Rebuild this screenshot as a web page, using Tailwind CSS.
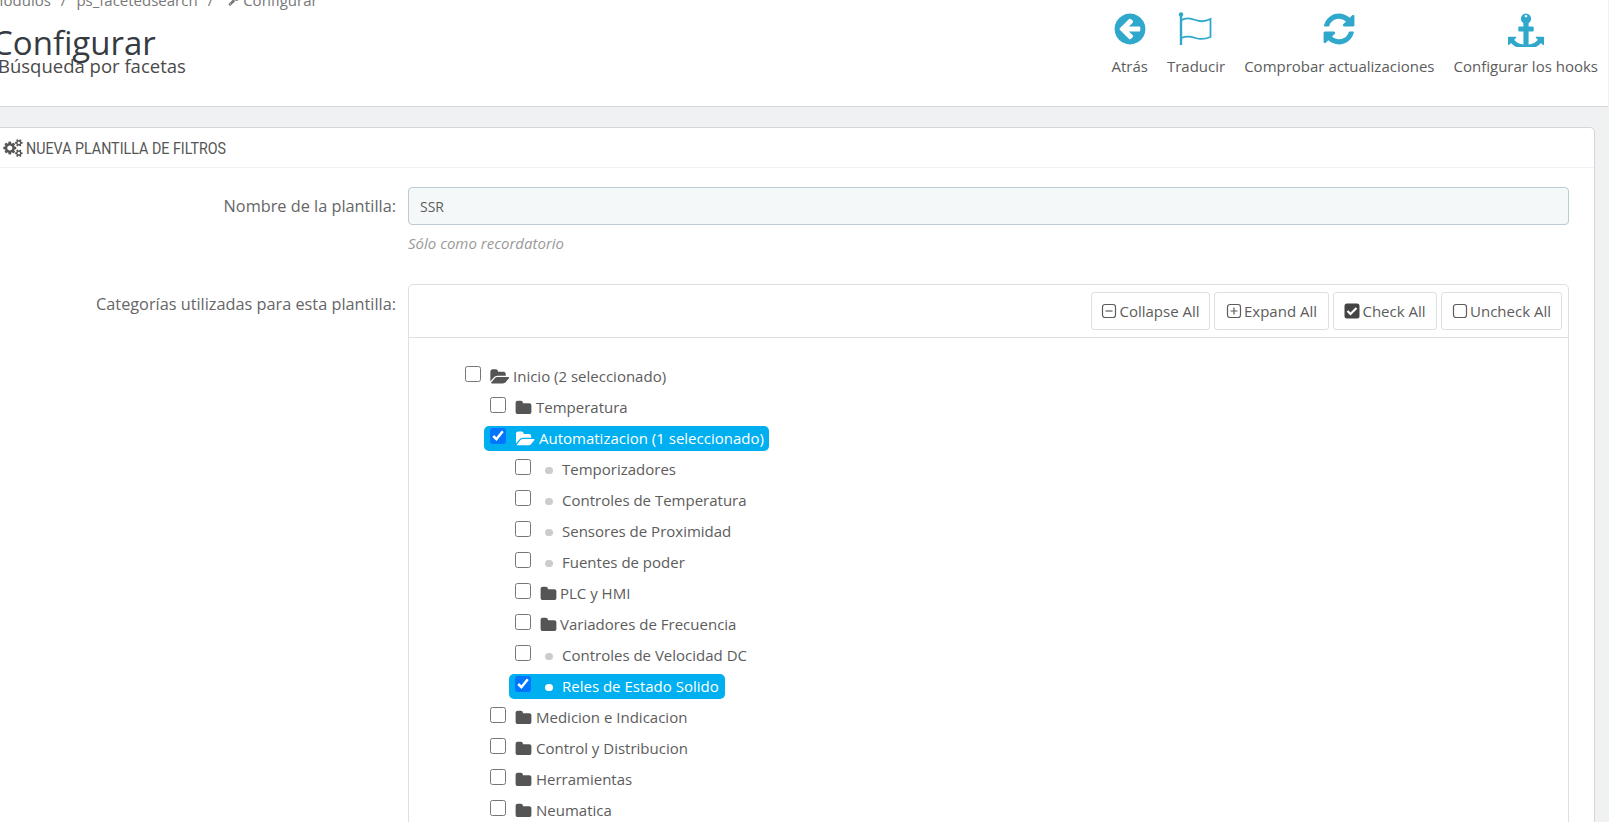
<!DOCTYPE html>
<html lang="es">
<head>
<meta charset="utf-8">
<script src="https://cdn.jsdelivr.net/npm/@tailwindcss/browser@4"></script>
<title>Configurar</title>
</head>
<body class="h-[822px] w-[1609px] overflow-hidden bg-[#eff1f2] font-['Open_Sans',sans-serif] text-[15px] text-[#5c5c5c]">
<svg class="hidden">
<symbol id="folder" viewBox="0 0 1792 1792"><path fill="currentColor" d="M1728 608v704q0 92-66 158t-158 66h-1216q-92 0-158-66t-66-158v-960q0-92 66-158t158-66h320q92 0 158 66t66 158v32h672q92 0 158 66t66 158z"/></symbol>
<symbol id="open" viewBox="0 0 1920 1792"><path fill="currentColor" d="M1879 952q0 31-31 66l-336 396q-43 51-120.500 86.500t-143.500 35.500h-1088q-34 0-60.500-13t-26.500-43q0-31 31-66l336-396q43-51 120.500-86.500t143.500-35.500h1088q34 0 60.500 13t26.500 43zm-343-344v160h-832q-94 0-197 47.500t-164 119.500l-337 396-5 6q0-4-.5-12.500t-.5-12.500v-960q0-92 66-158t158-66h320q92 0 158 66t66 158v32h544q92 0 158 66t66 158z"/></symbol>
</svg>

<header class="flex h-[107px] w-[1608px] justify-between border-b border-[#d5d7d9] bg-white">
  <div class="-ml-[8px]">
    <div class="-mt-[10px] -ml-[2px] flex h-[20px] items-center gap-[10px] text-[15px] text-[#777]">
      <span>Módulos</span><span>/</span><span>ps_facetedsearch</span><span>/</span>
      <span class="ml-[5px] flex items-center gap-[3px]"><svg class="h-3 w-3" viewBox="0 0 1792 1792"><path fill="currentColor" d="M448 1472q0-26-19-45t-45-19-45 19-19 45 19 45 45 19 45-19 19-45zm644-420l-682 682q-37 37-90 37-52 0-91-37l-106-108q-38-36-38-90 0-53 38-91l681-681q39 98 114.500 173.500t173.500 114.500zm634-435q0 39-23 106-47 134-164.500 217.500t-258.500 83.500q-185 0-316.500-131.500t-131.500-316.500 131.500-316.500 316.500-131.500q58 0 121.500 16.500t107.500 46.500q16 11 16 28t-16 28l-293 169v224l193 107q5-3 79-48.500t135.500-81 70.500-35.500q15 0 23.500 10t8.500 25z"/></svg>Configurar</span>
    </div>
    <h1 class="mt-[11px] text-[33px] leading-[44px] font-normal text-[#363a41]">Configurar</h1>
    <p class="-mt-[11px] pl-[6px] text-[18.500px] leading-[24px] text-[#4a4a4a]">Búsqueda por facetas</p>
  </div>
  <nav class="mr-[10px] flex gap-[19px] pt-[11px] text-[15px] text-[#5c5c5c]">
    <a class="flex flex-col items-center gap-[8px]">
      <svg class="h-[36px] w-[36px] text-[#2fa8cc]" viewBox="0 0 1792 1792"><path fill="currentColor" d="M1408 960v-128q0-26-19-45t-45-19h-502l189-189q19-19 19-45t-19-45l-91-91q-18-18-45-18t-45 18l-362 362-91 91q-18 18-18 45t18 45l91 91 362 362q18 18 45 18t45-18l91-91q18-18 18-45t-18-45l-189-189h502q26 0 45-19t19-45zm256-64q0 209-103 385.500t-279.500 279.500-385.500 103-385.500-103-279.500-279.500-103-385.500 103-385.500 279.500-279.500 385.500-103 385.500 103 279.500 279.500 103 385.500z"/></svg>
      <span>Atrás</span>
    </a>
    <a class="flex flex-col items-center gap-[8px]">
      <svg class="h-[36px] w-[36px] text-[#2fa8cc]" viewBox="0 0 36 36" fill="none" stroke="currentColor"><circle cx="3" cy="3.500" r="2.200" fill="currentColor" stroke="none"/><path stroke-width="2.400" d="M3 4v30"/><path stroke-width="1.800" d="M3.500 9c5-3 9-2 14 0s9 2 15-1v18c-5 2-9 3-15 1s-10-2-14 0"/></svg>
      <span>Traducir</span>
    </a>
    <a class="flex flex-col items-center gap-[8px]">
      <svg class="h-[36px] w-[36px] text-[#2fa8cc]" viewBox="0 0 1792 1792"><path fill="currentColor" d="M1639 1056q0 5-1 7-64 268-268 434.500t-478 166.500q-146 0-282.500-55t-243.500-157l-129 129q-19 19-45 19t-45-19-19-45v-448q0-26 19-45t45-19h448q26 0 45 19t19 45-19 45l-137 137q71 66 161 102t187 36q134 0 250-65t186-179q11-17 53-117 8-23 30-23h192q13 0 22.500 9.500t9.500 22.500zm25-800v448q0 26-19 45t-45 19h-448q-26 0-45-19t-19-45 19-45l138-138q-148-137-349-137-134 0-250 65t-186 179q-11 17-53 117-8 23-30 23h-199q-13 0-22.500-9.500t-9.500-22.500v-7q65-268 270-434.500t480-166.500q146 0 284 55.500t245 156.500l130-129q19-19 45-19t45 19 19 45z"/></svg>
      <span>Comprobar actualizaciones</span>
    </a>
    <a class="flex flex-col items-center gap-[8px]">
      <svg class="h-[36px] w-[36px] text-[#2fa8cc]" viewBox="0 0 1792 1792"><path fill="currentColor" d="M960 256q0-26-19-45t-45-19-45 19-19 45 19 45 45 19 45-19 19-45zm832 1056v352q0 22-20 30-8 2-12 2-12 0-23-9l-93-93q-119 143-318.500 226.500t-429.500 83.500-429.500-83.500-318.500-226.500l-93 93q-9 9-23 9-4 0-12-2-20-8-20-30v-352q0-14 9-23t23-9h352q22 0 30 20 8 19-7 35l-100 100q67 91 189.500 153.500t271.500 82.500v-647h-192q-26 0-45-19t-19-45v-128q0-26 19-45t45-19h192v-163q-58-34-93-92.500t-35-128.500q0-106 75-181t181-75 181 75 75 181q0 70-35 128.500t-93 92.500v163h192q26 0 45 19t19 45v128q0 26-19 45t-45 19h-192v647q149-20 271.500-82.500t189.500-153.500l-100-100q-15-16-7-35 8-20 30-20h352q14 0 23 9t9 23z"/></svg>
      <span>Configurar los hooks</span>
    </a>
  </nav>
</header>

<main class="mt-[20px] -ml-[4px] mr-[14px] h-[720px] rounded-[5px] border border-[#d3d6d8] bg-white">
  <div class="flex h-[40px] items-center gap-[3px] border-b border-[#eff1f2] pl-[6px] text-[#555]">
    <svg class="mt-[1px] h-[18px] w-[20px]" viewBox="0 0 1920 1792"><path fill="currentColor" d="M896 896q0-106-75-181t-181-75-181 75-75 181 75 181 181 75 181-75 75-181zm768 512q0-52-38-90t-90-38-90 38-38 90q0 53 37.500 90.500t90.500 37.500 90.500-37.500 37.500-90.500zm0-1024q0-52-38-90t-90-38-90 38-38 90q0 53 37.500 90.500t90.500 37.500 90.500-37.500 37.500-90.500zm-384 421v185q0 10-7 19.500t-16 10.500l-155 24q-11 35-32 76 34 48 90 115 7 11 7 20 0 12-7 19-23 30-82.500 89.500t-78.500 59.500q-11 0-21-7l-115-90q-37 19-77 31-11 108-23 155-7 24-30 24h-186q-11 0-20-7.500t-10-17.500l-23-153q-34-10-75-31l-118 89q-7 7-20 7-11 0-21-8-144-133-144-160 0-9 7-19 10-14 41-53t47-61q-23-44-35-82l-152-24q-10-1-17-9.500t-7-19.500v-185q0-10 7-19.500t16-10.500l155-24q11-35 32-76-34-48-90-115-7-11-7-20 0-12 7-20 22-30 82-89t79-59q11 0 21 7l115 90q34-18 77-32 11-108 23-154 7-24 30-24h186q11 0 20 7.500t10 17.500l23 153q34 10 75 31l118-89q8-7 20-7 11 0 21 8 144 133 144 160 0 8-7 19-12 16-42 54t-45 60q23 48 34 82l152 23q10 2 17 10.500t7 19.500zm640 533v140q0 16-149 31-12 27-30 52 51 113 51 138 0 4-4 7-122 71-124 71-8 0-46-47t-52-68q-20 2-30 2t-30-2q-14 21-52 68t-46 47q-2 0-124-71-4-3-4-7 0-25 51-138-18-25-30-52-149-15-149-31v-140q0-16 149-31 13-29 30-52-51-113-51-138 0-4 4-7 4-2 35-20t59-34 30-16q8 0 46 46.500t52 67.500q20-2 30-2t30 2q51-71 92-112l6-2q4 0 124 70 4 3 4 7 0 25-51 138 17 23 30 52 149 15 149 31zm0-1024v140q0 16-149 31-12 27-30 52 51 113 51 138 0 4-4 7-122 71-124 71-8 0-46-47t-52-68q-20 2-30 2t-30-2q-14 21-52 68t-46 47q-2 0-124-71-4-3-4-7 0-25 51-138-18-25-30-52-149-15-149-31v-140q0-16 149-31 13-29 30-52-51-113-51-138 0-4 4-7 4-2 35-20t59-34 30-16q8 0 46 46.500t52 67.500q20-2 30-2t30 2q51-71 92-112l6-2q4 0 124 70 4 3 4 7 0 25-51 138 17 23 30 52 149 15 149 31z"/></svg>
    <h2 class="mt-[2px] origin-left scale-x-[.84] font-['Roboto',sans-serif] text-[17px] whitespace-nowrap">NUEVA PLANTILLA DE FILTROS</h2>
  </div>

  <div class="mt-[19px] flex">
    <label class="w-[411px] pt-[7px] pr-[12px] text-right text-[16.300px] text-[#666]">Nombre de la plantilla:</label>
    <div class="w-[1161px]">
      <div class="flex h-[38px] items-center rounded-[4px] border border-[#bbcdd2] bg-[#f5f8f9] px-[11px] text-[14px]">SSR</div>
      <p class="mt-[8px] text-[15px] leading-[20px] text-[#999] italic">Sólo como recordatorio</p>
    </div>
  </div>

  <div class="mt-[31px] flex">
    <label class="w-[411px] pt-[8px] pr-[12px] text-right text-[16.300px] text-[#666]">Categorías utilizadas para esta plantilla:</label>
    <div class="h-[560px] w-[1161px] rounded-[5px] border border-[#dbe0e2]">
      <div class="flex h-[53px] items-center justify-end gap-[4px] border-b border-[#dbe0e2] pr-[6px]">
        <button class="flex h-[38px] w-[119px] items-center justify-center gap-[2px] rounded-[3px] border border-[#dbe0e2]"><svg class="h-[16px] w-[16px]" viewBox="0 0 16 16" fill="none" stroke="currentColor" stroke-width="1.200"><rect x="1.500" y="1.500" width="13" height="13" rx="2.500"/><path d="M4.500 8h7"/></svg>Collapse All</button>
        <button class="flex h-[38px] w-[115px] items-center justify-center gap-[2px] rounded-[3px] border border-[#dbe0e2]"><svg class="h-[16px] w-[16px]" viewBox="0 0 16 16" fill="none" stroke="currentColor" stroke-width="1.200"><rect x="1.500" y="1.500" width="13" height="13" rx="2.500"/><path d="M4.500 8h7M8 4.500v7"/></svg>Expand All</button>
        <button class="flex h-[38px] w-[104px] items-center justify-center gap-[2px] rounded-[3px] border border-[#dbe0e2]"><svg class="h-[16px] w-[16px] text-[#444]" viewBox="0 0 16 16"><rect x="0.500" y="0.500" width="15" height="15" rx="2.500" fill="currentColor"/><path d="M3.500 8l3 3 6-6" fill="none" stroke="#fff" stroke-width="2.200"/></svg>Check All</button>
        <button class="flex h-[38px] w-[121px] items-center justify-center gap-[2px] rounded-[3px] border border-[#dbe0e2]"><svg class="h-[16px] w-[16px]" viewBox="0 0 16 16" fill="none" stroke="currentColor" stroke-width="1.200"><rect x="1.500" y="1.500" width="13" height="13" rx="2.500"/></svg>Uncheck All</button>
      </div>

      <ul class="pt-[26px] pl-[50px]">
        <li class="mb-[6px] flex h-[25px] w-fit items-center px-[6px]"><input type="checkbox" class="-mt-[5px] h-4 w-4"><svg class="ml-[9px] h-[18px] w-[20px] text-[#555]"><use href="#open"/></svg><span class="ml-[3px]">Inicio (2 seleccionado)</span></li>
        <li>
          <ul class="pl-[25px]">
            <li class="mb-[6px] flex h-[25px] w-fit items-center px-[6px]"><input type="checkbox" class="-mt-[5px] h-4 w-4"><svg class="ml-[9px] h-[18px] w-[17px] text-[#555]"><use href="#folder"/></svg><span class="ml-[4px]">Temperatura</span></li>
            <li class="mb-[6px] flex h-[25px] w-fit items-center rounded-[5px] bg-[#00aff0] pr-[5px] pl-[6px] text-white"><input type="checkbox" checked class="-mt-[5px] h-4 w-4"><svg class="ml-[10px] h-[18px] w-[19px]"><use href="#open"/></svg><span class="ml-[4px]">Automatizacion (1 seleccionado)</span></li>
            <li>
              <ul class="pl-[25px]">
                <li class="mb-[6px] flex h-[25px] w-fit items-center px-[6px]"><input type="checkbox" class="-mt-[5px] h-4 w-4"><i class="mt-[2px] ml-[14px] h-[7px] w-[8px] rounded-full bg-[#ccc]"></i><span class="ml-[9px]">Temporizadores</span></li>
                <li class="mb-[6px] flex h-[25px] w-fit items-center px-[6px]"><input type="checkbox" class="-mt-[5px] h-4 w-4"><i class="mt-[2px] ml-[14px] h-[7px] w-[8px] rounded-full bg-[#ccc]"></i><span class="ml-[9px]">Controles de Temperatura</span></li>
                <li class="mb-[6px] flex h-[25px] w-fit items-center px-[6px]"><input type="checkbox" class="-mt-[5px] h-4 w-4"><i class="mt-[2px] ml-[14px] h-[7px] w-[8px] rounded-full bg-[#ccc]"></i><span class="ml-[9px]">Sensores de Proximidad</span></li>
                <li class="mb-[6px] flex h-[25px] w-fit items-center px-[6px]"><input type="checkbox" class="-mt-[5px] h-4 w-4"><i class="mt-[2px] ml-[14px] h-[7px] w-[8px] rounded-full bg-[#ccc]"></i><span class="ml-[9px]">Fuentes de poder</span></li>
                <li class="mb-[6px] flex h-[25px] w-fit items-center px-[6px]"><input type="checkbox" class="-mt-[5px] h-4 w-4"><svg class="ml-[9px] h-[18px] w-[17px] text-[#555]"><use href="#folder"/></svg><span class="ml-[3px]">PLC y HMI</span></li>
                <li class="mb-[6px] flex h-[25px] w-fit items-center px-[6px]"><input type="checkbox" class="-mt-[5px] h-4 w-4"><svg class="ml-[9px] h-[18px] w-[17px] text-[#555]"><use href="#folder"/></svg><span class="ml-[3px]">Variadores de Frecuencia</span></li>
                <li class="mb-[6px] flex h-[25px] w-fit items-center px-[6px]"><input type="checkbox" class="-mt-[5px] h-4 w-4"><i class="mt-[2px] ml-[14px] h-[7px] w-[8px] rounded-full bg-[#ccc]"></i><span class="ml-[9px]">Controles de Velocidad DC</span></li>
                <li class="mb-[6px] flex h-[25px] w-fit items-center rounded-[5px] bg-[#00aff0] px-[6px] text-white"><input type="checkbox" checked class="-mt-[5px] h-4 w-4"><i class="mt-[2px] ml-[14px] h-[7px] w-[8px] rounded-full bg-white"></i><span class="ml-[9px]">Reles de Estado Solido</span></li>
              </ul>
            </li>
            <li class="mb-[6px] flex h-[25px] w-fit items-center px-[6px]"><input type="checkbox" class="-mt-[5px] h-4 w-4"><svg class="ml-[9px] h-[18px] w-[17px] text-[#555]"><use href="#folder"/></svg><span class="ml-[4px]">Medicion e Indicacion</span></li>
            <li class="mb-[6px] flex h-[25px] w-fit items-center px-[6px]"><input type="checkbox" class="-mt-[5px] h-4 w-4"><svg class="ml-[9px] h-[18px] w-[17px] text-[#555]"><use href="#folder"/></svg><span class="ml-[4px]">Control y Distribucion</span></li>
            <li class="mb-[6px] flex h-[25px] w-fit items-center px-[6px]"><input type="checkbox" class="-mt-[5px] h-4 w-4"><svg class="ml-[9px] h-[18px] w-[17px] text-[#555]"><use href="#folder"/></svg><span class="ml-[4px]">Herramientas</span></li>
            <li class="mb-[6px] flex h-[25px] w-fit items-center px-[6px]"><input type="checkbox" class="-mt-[5px] h-4 w-4"><svg class="ml-[9px] h-[18px] w-[17px] text-[#555]"><use href="#folder"/></svg><span class="ml-[4px]">Neumatica</span></li>
          </ul>
        </li>
      </ul>
    </div>
  </div>
</main>
</body>
</html>
